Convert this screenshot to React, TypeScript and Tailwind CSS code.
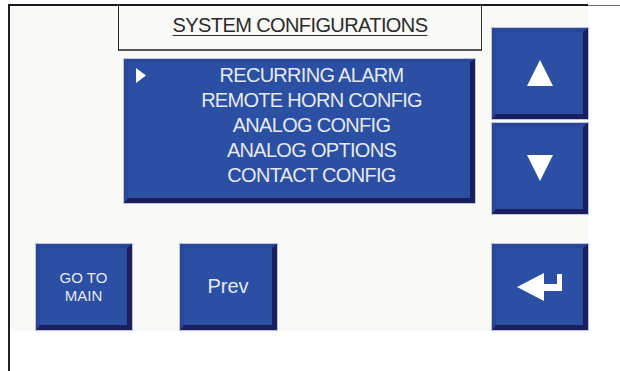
import React from "react";

const btn =
  "box-border bg-[#2a4fa3] border-t-4 border-l-4 border-t-[#2a4698] border-l-[#2a4698] border-b-[5px] border-r-[5px] border-b-[#1c1f5e] border-r-[#1c1f5e] shadow-[0_0_0_1px_#bcc4de] flex items-center justify-center text-[#e6e8ef]";

export default function App() {
  const items = [
    "RECURRING ALARM",
    "REMOTE HORN CONFIG",
    "ANALOG CONFIG",
    "ANALOG OPTIONS",
    "CONTACT CONFIG",
  ];
  return (
    <div
      className="w-[620px] h-[371px] bg-white pt-[4px] pl-[8px] flex flex-col overflow-hidden"
      style={{ fontFamily: '"Liberation Sans", Arial, sans-serif' }}
    >
      <div className="flex h-[2px] shrink-0">
        <div className="w-[580px] h-[2px] bg-[#1a1a1a]" />
        <div className="flex-1 h-px mt-px bg-[#6b6b6b]" />
      </div>
      <div className="flex-1 border-l-2 border-[#222]">
        <div className="w-[578px] h-[325px] bg-[#f9f9f7] flex">
          {/* left column */}
          <div className="w-[482px] flex flex-col">
            <div className="ml-[108px] w-[364px] h-[45px] box-border border-l border-r border-b-2 border-l-[#222] border-r-[#333] border-b-[#555] pt-[7px] text-center text-[20px] leading-[25px] tracking-[-0.6px] text-[#2b2b2b]">
              <span className="underline underline-offset-[3px] decoration-1">
                SYSTEM CONFIGURATIONS
              </span>
            </div>
            <div
              className={
                "mt-[8px] ml-[114px] w-[351px] h-[144px] box-border bg-[#2a4fa3] border-t-[3px] border-l-4 border-t-[#2a4698] border-l-[#2a4698] border-b-[5px] border-r-[5px] border-b-[#1c1f5e] border-r-[#1c1f5e] shadow-[0_0_0_1px_#bcc4de] pt-[1px] flex flex-col text-[#e6e8ef] text-[20px] leading-[25px] tracking-[-0.7px]"
              }
            >
              {items.map((t, i) => (
                <div key={t} className="flex items-center h-[25px]">
                  <div className="w-[25px] h-[25px] flex items-center">
                    {i === 0 && (
                      <svg width="10" height="15" viewBox="0 0 10 15" className="ml-[8px]">
                        <polygon points="0,0 10,7.5 0,15" fill="#ffffff" />
                      </svg>
                    )}
                  </div>
                  <div className="flex-1 text-center whitespace-nowrap">{t}</div>
                </div>
              ))}
            </div>
            <div className="mt-[41px] pl-[26px] flex gap-[48px]">
              <div className={btn + " w-[96px] h-[86px] flex-col text-[15px] leading-[18px] text-center"}>
                <span>GO TO</span>
                <span>MAIN</span>
              </div>
              <div className={btn + " w-[97px] h-[86px] text-[20px] leading-[25px]"}>
                Prev
              </div>
            </div>
          </div>
          {/* right column */}
          <div className="w-[96px] flex flex-col">
            <div className={btn + " mt-[22px] h-[91px]"}>
              <svg width="26" height="26" viewBox="0 0 26 26">
                <polygon points="13,0 26,26 0,26" fill="#ffffff" />
              </svg>
            </div>
            <div className={btn + " mt-[4px] h-[91px]"}>
              <svg width="26" height="26" viewBox="0 0 26 26">
                <polygon points="0,0 26,0 13,26" fill="#ffffff" />
              </svg>
            </div>
            <div className={btn + " mt-[30px] h-[86px]"}>
              <svg width="45" height="28" viewBox="0 0 45 28">
                <path d="M0 14 L27 0 L27 11 L40 11 L40 1 L45 1 L45 18 L27 18 L27 28 Z" fill="#ffffff" />
              </svg>
            </div>
          </div>
        </div>
      </div>
    </div>
  );
}
